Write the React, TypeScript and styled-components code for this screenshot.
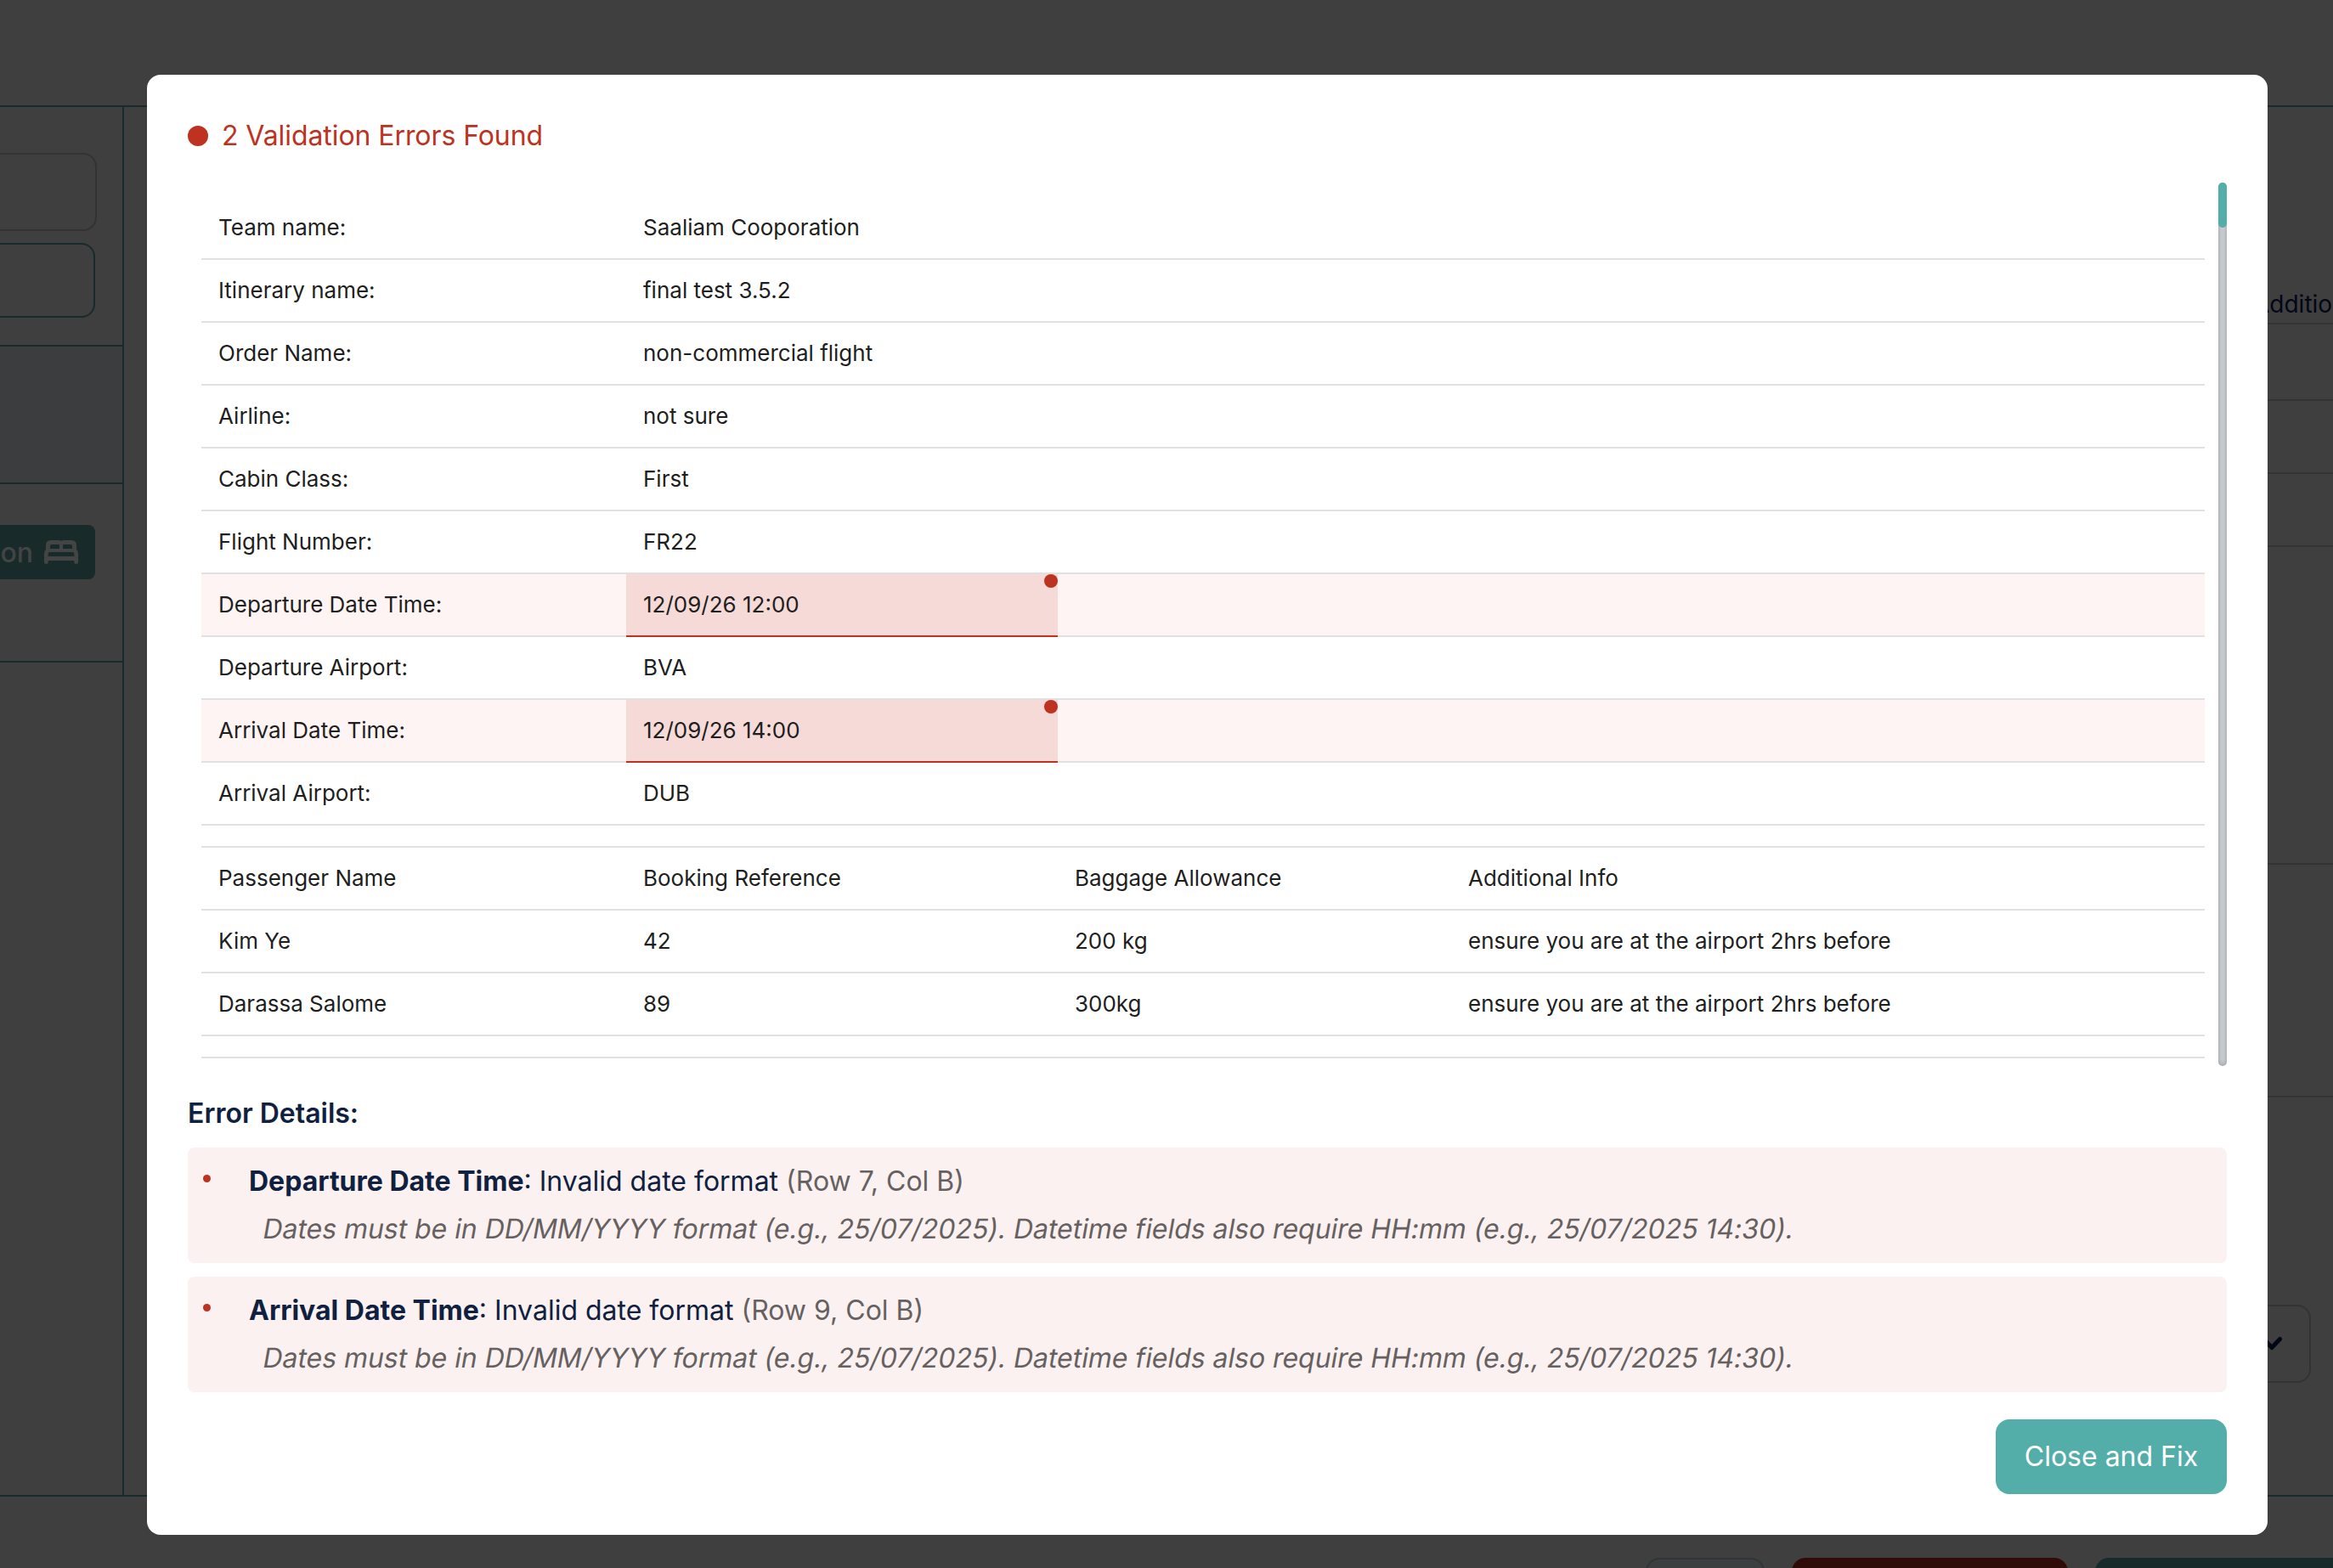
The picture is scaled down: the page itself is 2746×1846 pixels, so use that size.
import React from 'react';
import styled, { createGlobalStyle } from 'styled-components';

const GlobalStyle = createGlobalStyle`
  * {
    box-sizing: border-box;
  }

  body {
    background: #3f3f3f;
    color: #020716;
    font-family: Inter, sans-serif;
    margin: 0;
    overflow: hidden;
  }
`;

const Page = styled.div`
  display: flex;
  flex-direction: column;
  height: 1846px;
  overflow: hidden;
  position: relative;
  width: 2746px;
`;

const TopBar = styled.header`
  border-bottom: 2px solid #182b2a;
  flex: none;
  height: 126px;
`;

const Workspace = styled.div`
  border-bottom: 2px solid #182b2a;
  display: flex;
  flex: none;
  height: 1636px;
  justify-content: space-between;
`;

const Sidebar = styled.aside`
  border-right: 2px solid #182b2a;
  width: 146px;
`;

const SidebarSection = styled.div<{ height: number; selected?: boolean }>`
  background: ${({ selected }) => (selected ? '#3c3d3f' : 'transparent')};
  border-bottom: 2px solid #182b2a;
  height: ${({ height }) => height}px;
  overflow: hidden;
`;

const SearchField = styled.div`
  border: 2px solid #333333;
  border-left: 0;
  border-radius: 0 16px 16px 0;
  height: 92px;
  margin-top: 54px;
  width: 114px;
`;

const OutlineButton = styled.div`
  border: 2px solid #182b2a;
  border-left: 0;
  border-radius: 0 16px 16px 0;
  height: 88px;
  margin-top: 14px;
  width: 112px;
`;

const AccommodationTag = styled.div`
  align-items: center;
  background: #182b2a;
  border-radius: 0 8px 8px 0;
  color: #434444;
  display: flex;
  font-size: 32px;
  font-weight: 500;
  gap: 13px;
  height: 64px;
  justify-content: flex-end;
  margin-top: 48px;
  padding-right: 20px;
  width: 112px;
`;

const SidePanel = styled.div`
  width: 110px;
`;

const PanelRow = styled.div<{ height: number }>`
  align-items: flex-end;
  border-bottom: 2px solid #333333;
  display: flex;
  font-size: 28px;
  height: ${({ height }) => height}px;
  line-height: 44px;
  padding-left: 16px;
  white-space: nowrap;
`;

const SelectField = styled.div`
  align-items: center;
  border: 2px solid #333333;
  border-radius: 16px;
  display: flex;
  height: 92px;
  justify-content: flex-end;
  margin-top: 244px;
  padding-right: 32px;
  width: 84px;
`;

const FooterActions = styled.div`
  display: flex;
  gap: 32px;
  margin-left: 1937px;
  margin-top: 72px;
`;

const FooterButton = styled.div<{ width: number; fill: string; line: string }>`
  background: ${({ fill }) => fill};
  border: 2px solid ${({ line }) => line};
  border-radius: 16px;
  flex: none;
  height: 88px;
  width: ${({ width }) => width}px;
`;

const Modal = styled.section`
  background: #ffffff;
  border-radius: 16px;
  display: flex;
  flex-direction: column;
  height: 1719px;
  left: 173px;
  padding: 48px;
  position: absolute;
  top: 87.5px;
  width: 2496px;
`;

const Title = styled.h1`
  align-items: center;
  color: #bd3220;
  display: flex;
  font-size: 32px;
  font-weight: 400;
  gap: 16px;
  letter-spacing: -0.08px;
  line-height: 48px;
  margin: 0 0 31.5px;

  &::before {
    background: #bd3220;
    border-radius: 50%;
    content: '';
    height: 24px;
    width: 24px;
  }
`;

const Preview = styled.div`
  display: flex;
  flex: none;
  height: 1040px;
  justify-content: space-between;
`;

const Sheet = styled.div`
  padding: 17px 0 0 16px;
  width: 2374px;
`;

const Row = styled.div<{ invalid?: boolean }>`
  background: ${({ invalid }) => (invalid ? '#fef4f3' : 'transparent')};
  border-bottom: 2px solid #e0e0e0;
  display: grid;
  grid-template-columns: 500px 508px 463px 1fr;
  height: 74px;
`;

const SpacerRow = styled.div`
  border-bottom: 2px solid #e0e0e0;
  height: 26px;
`;

const Cell = styled.div<{ invalid?: boolean }>`
  background: ${({ invalid }) => (invalid ? '#f5dad7' : 'transparent')};
  border-bottom: ${({ invalid }) => (invalid ? '2px solid #bd3220' : '0')};
  color: #1e1e1e;
  font-size: 26px;
  height: ${({ invalid }) => (invalid ? '74px' : '72px')};
  line-height: 72px;
  padding-left: 20px;
  position: relative;
  white-space: nowrap;
`;

const CellMark = styled.span`
  background: #bd3220;
  border-radius: 50%;
  height: 16px;
  position: absolute;
  right: 0;
  top: 0;
  width: 16px;
`;

const ScrollTrack = styled.div`
  background: #ced1d5;
  border-radius: 5px;
  box-shadow: inset 0 0 6px rgba(0, 0, 0, 0.3);
  width: 10px;
`;

const ScrollThumb = styled.div`
  background: #53aeaa;
  border-radius: 5px;
  height: 53px;
`;

const DetailsTitle = styled.h2`
  color: #10203f;
  font-size: 32px;
  font-weight: 600;
  line-height: 48px;
  margin: 31.5px 0 16px;
`;

const ErrorList = styled.ul`
  display: flex;
  flex-direction: column;
  gap: 16px;
  list-style: none;
  margin: 0 0 32px;
  padding: 0;
`;

const ErrorItem = styled.li`
  background: #fbf1f0;
  border-radius: 8px;
  color: #10203f;
  display: flex;
  font-size: 32px;
  height: 136px;
  line-height: 56px;
  padding: 12px 0 12px 18px;
`;

const Bullet = styled.span`
  background: #bd3220;
  border-radius: 50%;
  height: 9px;
  margin: 20px 45px 0 0;
  width: 9px;
`;

const Position = styled.span`
  color: #666160;
`;

// slants the upright face, so the letters keep their roman shapes
const Hint = styled.div`
  color: #666160;
  letter-spacing: -0.05px;
  padding-left: 15px;
  transform: skewX(-10deg);
  transform-origin: 0 39px;
  white-space: nowrap;
`;

const CloseButton = styled.button`
  align-self: flex-end;
  background: #53aeaa;
  border: 0;
  border-radius: 16px;
  color: #ffffff;
  font-family: inherit;
  font-size: 32px;
  height: 88px;
  padding: 0;
  width: 272px;
`;

const details = [
  { label: 'Team name:', value: 'Saaliam Cooporation' },
  { label: 'Itinerary name:', value: 'final test 3.5.2' },
  { label: 'Order Name:', value: 'non-commercial flight' },
  { label: 'Airline:', value: 'not sure' },
  { label: 'Cabin Class:', value: 'First' },
  { label: 'Flight Number:', value: 'FR22' },
  { label: 'Departure Date Time:', value: '12/09/26 12:00', invalid: true },
  { label: 'Departure Airport:', value: 'BVA' },
  { label: 'Arrival Date Time:', value: '12/09/26 14:00', invalid: true },
  { label: 'Arrival Airport:', value: 'DUB' },
];

const passengers = [
  ['Passenger Name', 'Booking Reference', 'Baggage Allowance', 'Additional Info'],
  ['Kim Ye', '42', '200 kg', 'ensure you are at the airport 2hrs before'],
  ['Darassa Salome', '89', '300kg', 'ensure you are at the airport 2hrs before'],
];

const errors = [
  { field: 'Departure Date Time', position: '(Row 7, Col B)' },
  { field: 'Arrival Date Time', position: '(Row 9, Col B)' },
];

const BedIcon = () => (
  <svg width="40" height="28" viewBox="0 0 40 28" fill="currentColor">
    <path
      fillRule="evenodd"
      d="M2 11V6q0-6 6-6h9q1.800 0 3 1 1.200-1 3-1h9q6 0 6 6v5q2 1.500 2 4v11q0 2-2.300 2T35.300 26v-2H4.700v2q0 2-2.400 2T0 26V15q0-2.500 2-4zM9 5q-2 0-2 2v3h11V6q0-1-1-1zM23 5q-1 0-1 1v4h11V7q0-2-2-2zM6.500 14q-1.800 0-1.800 1.800V19h30.600v-3.200q0-1.800-1.800-1.800z"
    />
  </svg>
);

const ChevronIcon = () => (
  <svg width="24" height="18" viewBox="0 0 24 18" fill="none">
    <path
      d="M2.500 3.500L12 13.500l9.500-10"
      stroke="currentColor"
      strokeWidth="5"
      strokeLinecap="round"
      strokeLinejoin="round"
    />
  </svg>
);

const Backdrop = () => (
  <>
    <TopBar />
    <Workspace>
      <Sidebar>
        <SidebarSection height={282}>
          <SearchField />
          <OutlineButton />
        </SidebarSection>
        <SidebarSection height={162} selected />
        <SidebarSection height={210}>
          <AccommodationTag>
            on
            <BedIcon />
          </AccommodationTag>
        </SidebarSection>
      </Sidebar>
      <SidePanel>
        <PanelRow height={256}>Additio</PanelRow>
        <PanelRow height={90} />
        <PanelRow height={86} />
        <PanelRow height={86} />
        <PanelRow height={374} />
        <PanelRow height={274} />
        <SelectField>
          <ChevronIcon />
        </SelectField>
      </SidePanel>
    </Workspace>
    <FooterActions>
      <FooterButton width={140} fill="#3c3f3f" line="#303535" />
      <FooterButton width={325} fill="#2f0c08" line="#2f0c08" />
      <FooterButton width={400} fill="#182b2a" line="#182b2a" />
    </FooterActions>
  </>
);

const App = () => (
  <Page>
    <GlobalStyle />
    <Backdrop />
    <Modal>
      <Title>2 Validation Errors Found</Title>
      <Preview>
        <Sheet>
          {details.map(({ label, value, invalid }) => (
            <Row key={label} invalid={invalid}>
              <Cell>{label}</Cell>
              <Cell invalid={invalid}>
                {value}
                {invalid && <CellMark />}
              </Cell>
            </Row>
          ))}
          <SpacerRow />
          {passengers.map((cells) => (
            <Row key={cells[0]}>
              {cells.map((cell) => (
                <Cell key={cell}>{cell}</Cell>
              ))}
            </Row>
          ))}
          <SpacerRow />
        </Sheet>
        <ScrollTrack>
          <ScrollThumb />
        </ScrollTrack>
      </Preview>
      <DetailsTitle>Error Details:</DetailsTitle>
      <ErrorList>
        {errors.map(({ field, position }) => (
          <ErrorItem key={field}>
            <Bullet />
            <div>
              <strong>{field}</strong>
              {': Invalid date format '}
              <Position>{position}</Position>
              <Hint>
                Dates must be in DD/MM/YYYY format (e.g., 25/07/2025). Datetime fields also require
                HH:mm (e.g., 25/07/2025 14:30).
              </Hint>
            </div>
          </ErrorItem>
        ))}
      </ErrorList>
      <CloseButton>Close and Fix</CloseButton>
    </Modal>
  </Page>
);

export default App;
